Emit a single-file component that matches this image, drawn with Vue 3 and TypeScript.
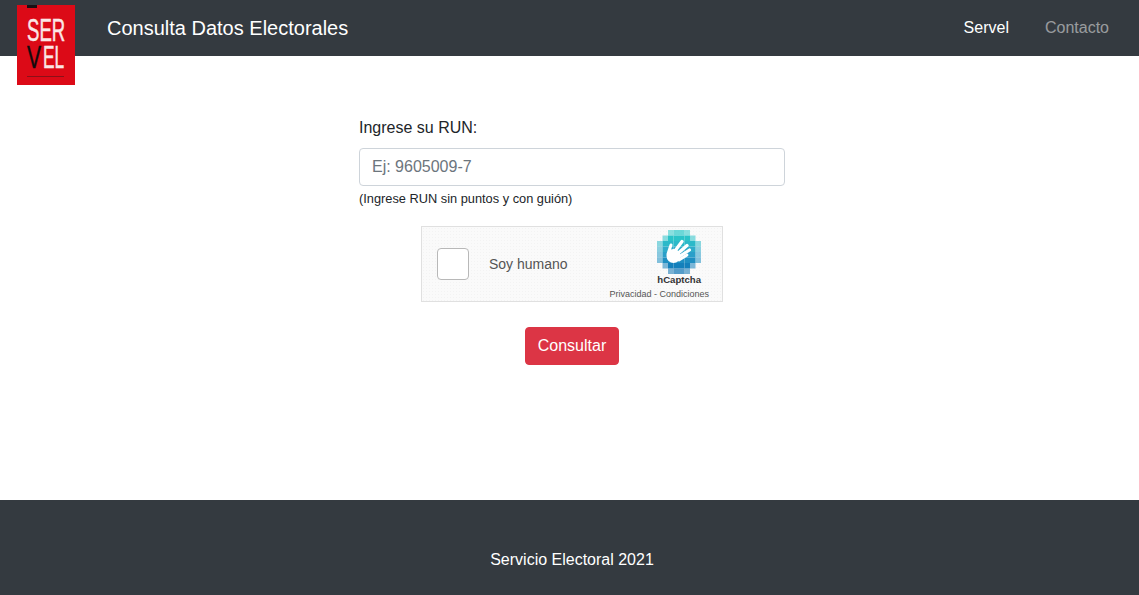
<script setup lang="ts">
import { ref } from 'vue'

const run = ref('')

// hCaptcha logo pixels: [columns in the row], colour goes teal to blue from top to bottom
const rows = [
  [2, 3, 4, 5],
  [1, 2, 3, 4, 5, 6],
  [0, 1, 2, 3, 4, 5, 6, 7],
  [0, 1, 2, 3, 4, 5, 6, 7],
  [0, 1, 2, 3, 4, 5, 6, 7],
  [0, 1, 2, 3, 4, 5, 6, 7],
  [1, 2, 3, 4, 5, 6],
  [2, 3, 4, 5],
]
const colors = ['#2ec9c9', '#2bc3c8', '#2cb9c9', '#2facca', '#2a9fc9', '#1f8fc2', '#1480bb', '#0e74b3']

const cellOpacity = (row: number, col: number) => {
  const first = rows[row][0]
  const last = rows[row][rows[row].length - 1]
  if (col === first || col === last) return 0.55
  if (row === 0 || row === 7) return 0.7
  return 1
}
</script>

<template>
  <div class="page">
    <nav class="navbar">
      <div class="logo">
        <span class="logo-mark"></span>
        <span class="logo-text ser">SER</span>
        <span class="logo-text v">V</span>
        <span class="logo-text el">EL</span>
        <span class="logo-rule"></span>
      </div>
      <a class="brand">Consulta Datos Electorales</a>
      <ul class="nav-links">
        <li class="active">Servel</li>
        <li>Contacto</li>
      </ul>
    </nav>

    <main class="content">
      <form class="run-form" @submit.prevent>
        <label for="run">Ingrese su RUN:</label>
        <input id="run" v-model="run" type="text" placeholder="Ej: 9605009-7" />
        <small>(Ingrese RUN sin puntos y con guión)</small>

        <div class="captcha">
          <div class="check"></div>
          <span class="human">Soy humano</span>
          <div class="captcha-brand">
            <svg class="captcha-logo" viewBox="0 0 44 44" width="44" height="44">
              <g v-for="(cols, r) in rows" :key="r">
                <rect
                  v-for="c in cols"
                  :key="c"
                  :x="c * 5.5"
                  :y="r * 5.5"
                  width="5.5"
                  height="5.5"
                  :fill="colors[r]"
                  :opacity="cellOpacity(r, c)"
                />
              </g>
              <g stroke="#fff" stroke-linecap="round" fill="none">
                <line x1="15" y1="25" x2="25" y2="11.5" stroke-width="3.3" />
                <line x1="18" y1="26" x2="30" y2="15.5" stroke-width="3.3" />
                <line x1="20" y1="28" x2="32.5" y2="20" stroke-width="3.1" />
                <line x1="22" y1="30" x2="30" y2="25" stroke-width="2.8" />
                <line x1="11" y1="24" x2="14" y2="15" stroke-width="3" />
              </g>
              <circle cx="16.5" cy="26" r="7" fill="#fff" />
            </svg>
            <span class="captcha-name">hCaptcha</span>
            <span class="captcha-links">Privacidad - Condiciones</span>
          </div>
        </div>

        <button class="btn-consultar" type="submit">Consultar</button>
      </form>
    </main>

    <footer class="footer">Servicio Electoral 2021</footer>
  </div>
</template>

<style scoped>
.page {
  display: flex;
  flex-direction: column;
  min-height: 100vh;
  font-family: 'Liberation Sans', Arial, sans-serif;
  font-size: 16px;
  line-height: 1.5;
  color: #212529;
  background: #fff;
}
.navbar {
  display: flex;
  align-items: center;
  height: 56px;
  padding: 0 30px 0 17px;
  background: #343a40;
  flex-shrink: 0;
}
.logo {
  position: relative;
  top: 17px;
  width: 58px;
  height: 80px;
  margin-right: 32px;
  background: #dc0a17;
  overflow: hidden;
  z-index: 1;
}
.logo-mark {
  position: absolute;
  left: 10px;
  top: 0;
  width: 10px;
  height: 3px;
  background: #1a1014;
}
.logo-text {
  position: absolute;
  font-size: 32px;
  line-height: 24px;
  color: #fbe6e6;
  -webkit-text-stroke: 0.5px currentColor;
  transform-origin: left top;
  white-space: nowrap;
}
.ser {
  left: 10px;
  top: 13px;
  transform: scaleX(0.58);
}
.v {
  left: 10px;
  top: 40px;
  color: #120a0c;
  transform: scaleX(0.66);
}
.el {
  left: 26px;
  top: 40px;
  transform: scaleX(0.54);
}
.logo-rule {
  position: absolute;
  left: 10px;
  right: 11px;
  top: 71px;
  height: 1px;
  background: #8c1018;
}
.brand {
  font-size: 20px;
  color: #fff;
}
.nav-links {
  display: flex;
  gap: 36px;
  list-style: none;
  margin: 0 0 0 auto;
  padding: 0;
  color: rgba(255, 255, 255, 0.5);
}
.nav-links .active {
  color: #fff;
}
.content {
  flex: 1;
  display: flex;
  justify-content: center;
  padding: 60px 0 0 5px;
}
.run-form {
  display: flex;
  flex-direction: column;
  width: 426px;
}
label {
  margin-bottom: 8px;
}
input {
  box-sizing: border-box;
  height: 38px;
  padding: 6px 12px;
  font: inherit;
  color: #495057;
  border: 1px solid #ced4da;
  border-radius: 4px;
  outline: none;
}
input::placeholder {
  color: #6c757d;
}
small {
  margin-top: 4px;
  font-size: 12.8px;
  line-height: 18px;
}
.captcha {
  box-sizing: border-box;
  display: flex;
  align-items: center;
  align-self: center;
  position: relative;
  width: 302px;
  height: 76px;
  margin-top: 18px;
  padding-left: 15px;
  background-color: #fafafa;
  background-image: radial-gradient(#f3f3f3 0.6px, transparent 0.7px);
  background-size: 3px 3px;
  border: 1px solid #e0e0e0;
}
.check {
  box-sizing: border-box;
  width: 32px;
  height: 32px;
  background: #fff;
  border: 1px solid #b8b8b8;
  border-radius: 4px;
}
.human {
  margin-left: 20px;
  font-size: 14px;
  color: #555;
}
.captcha-brand {
  position: absolute;
  top: 3px;
  right: 13px;
  display: flex;
  flex-direction: column;
  align-items: flex-end;
}
.captcha-logo {
  margin-right: 8px;
}
.captcha-name {
  margin-right: 8px;
  font-size: 9.6px;
  font-weight: 700;
  line-height: 12px;
  color: #333;
}
.captcha-links {
  margin-top: 2px;
  font-size: 9px;
  line-height: 12px;
  color: #555;
  white-space: nowrap;
}
.btn-consultar {
  align-self: center;
  height: 38px;
  margin-top: 25px;
  padding: 0 12px;
  font: inherit;
  color: #fff;
  background: #dc3545;
  border: 1px solid #dc3545;
  border-radius: 4px;
  cursor: pointer;
}
.footer {
  flex-shrink: 0;
  box-sizing: border-box;
  height: 95px;
  padding: 48px 0 0 5px;
  text-align: center;
  color: #fff;
  background: #343a40;
}
</style>
